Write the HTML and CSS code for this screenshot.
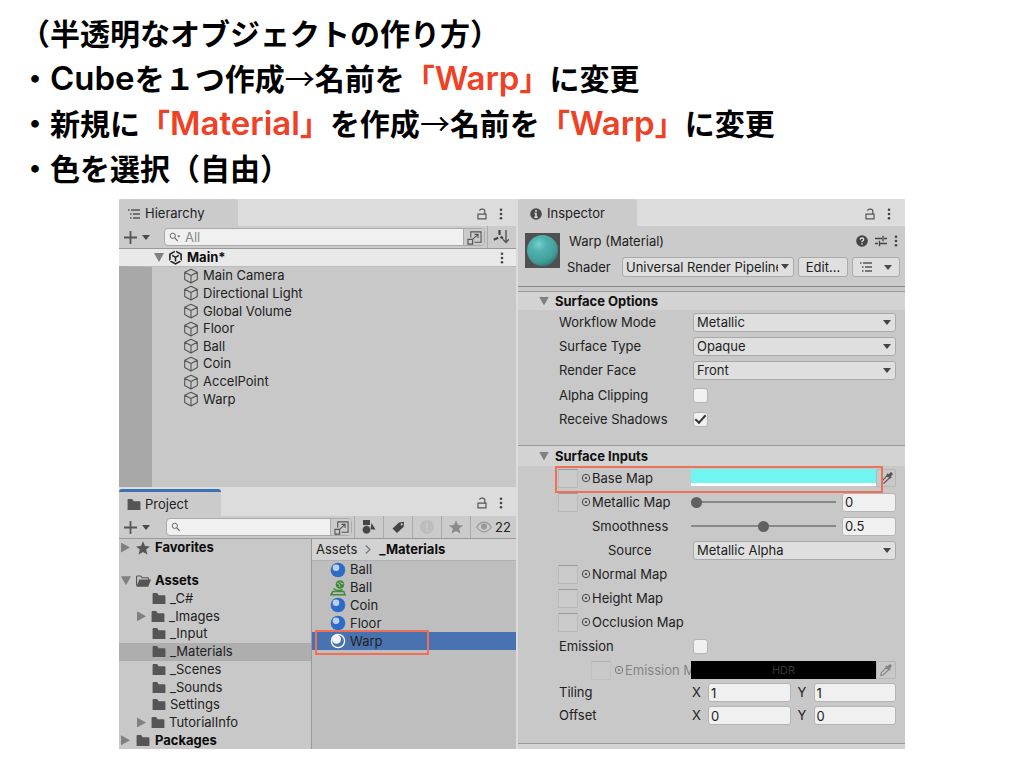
FILE: index.html
```html
<!DOCTYPE html>
<html lang="ja">
<head>
<meta charset="utf-8">
<title>半透明なオブジェクトの作り方</title>
<link rel="stylesheet" href="styles.css">
</head>
<body>
<svg class="defs" aria-hidden="true">
  <symbol id="cube" viewBox="0 0 16 16"><path d="M8 1.2 14.3 4.300V11.500L8 15 1.700 11.500V4.300zM1.700 4.300 8 7.600l6.300-3.300M8 7.600V15" fill="none" stroke="#555" stroke-width="1.100" stroke-linejoin="round"/></symbol>
  <symbol id="unity" viewBox="0 0 16 16"><path d="M8 1.200 14 4.500V11.500L8 14.800 2 11.500V4.500z" fill="none" stroke="#222" stroke-width="1.700"/><path d="M4.500 5.800 8 7.900l3.500-2.100M8 7.900v4.300" fill="none" stroke="#222" stroke-width="1.700"/><path d="M8 0v4M.8 12.500 4.200 10.500M15.200 12.500l-3.400-2" stroke="#e9e9e9" stroke-width="1.300"/></symbol>
  <symbol id="folder" viewBox="0 0 14 12"><path d="M0 1q0-1 1-1h4l1.500 2.500H13q1 0 1 1V12H0z" fill="#555"/></symbol>
  <symbol id="folder-open" viewBox="0 0 16 12"><path d="M.6 11V1.500Q.6.6 1.500.6H5L6.500 2.500h6q.8 0 .8.8V5" fill="none" stroke="#555" stroke-width="1.200"/><path d="M3.500 4.500H16L13 12H.5z" fill="#555"/></symbol>
  <symbol id="list" viewBox="0 0 12 10"><path d="M0 1h1.500M3 1h9M2 5h1.500M5 5h7M2 9h1.500M5 9h7" stroke="#555" stroke-width="1.300"/></symbol>
  <symbol id="lock" viewBox="0 0 10 12"><path d="M1 6.200h8v4.700H1zM7.800 6V3.200Q7.800 1.200 5.500 1.200H4.600Q2.800 1.200 2.600 2.800" fill="none" stroke="#555" stroke-width="1.200"/></symbol>
  <symbol id="dots" viewBox="0 0 4 12"><g fill="#444"><circle cx="2" cy="1.700" r="1.300"/><circle cx="2" cy="6" r="1.300"/><circle cx="2" cy="10.300" r="1.300"/></g></symbol>
  <symbol id="plus" viewBox="0 0 13 13"><path d="M6.500 0v13M0 6.500h13" stroke="#555" stroke-width="1.800"/></symbol>
  <symbol id="lens" viewBox="0 0 12 10"><circle cx="3.800" cy="3.800" r="2.600" fill="none" stroke="#666"/><path d="M5.800 5.800l2.800 3" stroke="#666" stroke-width="1.200"/></symbol>
  <symbol id="expand" viewBox="0 0 16 16"><path d="M4 8V2h11v11H8M1 10h5v5H1zM6.500 9.500 11.500 5M8 4.700h3.800v3.800" fill="none" stroke="#555" stroke-width="1.200"/></symbol>
  <symbol id="star" viewBox="0 0 14 14"><path d="M7 .3 9 5l5 .4-3.800 3.200 1.200 5L7 11l-4.400 2.600 1.200-5L0 5.400 5 5z"/></symbol>
  <symbol id="orb" viewBox="0 0 16 16"><circle cx="8" cy="8" r="7.300" fill="#2e6bc9"/><circle cx="6" cy="5.700" r="3.300" fill="#bcd0ec"/></symbol>
  <symbol id="orb-white" viewBox="0 0 16 16"><circle cx="8" cy="8" r="6.600" fill="#4873b0" stroke="#fff" stroke-width="1.300"/><circle cx="6.500" cy="6.200" r="4.500" fill="#f2f4f8"/></symbol>
  <symbol id="physic" viewBox="0 0 16 16"><circle cx="10" cy="4.500" r="4.300" fill="#3f8a3b"/><path d="M7 3q3 .5 3 4M9.500 1.500q1 2.500 4 2.500" stroke="#bebebe" fill="none"/><path d="M2.800 11.500h10.900l1.300 3.300H1z" fill="none" stroke="#3f8a3b" stroke-width="1.500"/><path d="M3.500 8.500q4.500 3.500 9 1" fill="none" stroke="#3f8a3b" stroke-width="1.500"/></symbol>
  <symbol id="target" viewBox="0 0 10 10"><circle cx="5" cy="5" r="3.700" fill="none" stroke="#444"/><circle cx="5" cy="5" r="1.100" fill="#444"/></symbol>
  <symbol id="dropper" viewBox="0 0 12 12"><path d="M6.300 3.300 8.700 5.700 3.200 11 .8 11.400 1.200 9z" fill="none" stroke="#555" stroke-width="1.100"/><path d="M5.500 2.300 9.800 6.600l1-1-1-1 1.700-1.900Q12 1.700 11.200.8 10.300 0 9.300.6L7.500 2.200l-1-1z" fill="#555"/></symbol>
</svg>

<header class="intro">
  <p>（半透明なオブジェクトの作り方）</p>
  <p>・<span class="latin">Cube</span>を１つ作成<span class="arrow">→</span>名前を<em>「<span class="latin">Warp</span>」</em>に変更</p>
  <p>・新規に<em>「<span class="latin">Material</span>」</em>を作成<span class="arrow">→</span>名前を<em>「<span class="latin">Warp</span>」</em>に変更</p>
  <p>・色を選択（自由）</p>
</header>

<main class="editor">
  <div class="left">
    <section class="hierarchy">
      <div class="tabbar">
        <button class="tab"><svg width="12" height="10"><use href="#list"/></svg>Hierarchy</button>
        <div class="tab-tools"><svg width="10" height="12"><use href="#lock"/></svg><svg width="4" height="12"><use href="#dots"/></svg></div>
      </div>
      <div class="toolbar">
        <button class="add" aria-label="Create"><svg width="13" height="13"><use href="#plus"/></svg><i class="down"></i></button>
        <label class="search"><svg width="12" height="10"><use href="#lens"/><path d="M8 3.500h3.500l-1.700 2z" fill="#666"/></svg><input type="text" placeholder="All" aria-label="Search hierarchy"><span class="expand"><svg width="15" height="15"><use href="#expand"/></svg></span></label>
        <button class="tool sort" aria-label="Sort"><svg width="16" height="14" viewBox="0 0 16 14"><path d="M13 0v12M9.800 9.200 13 12.400l3-3.200" fill="none" stroke="#555" stroke-width="1.400"/><path d="M6.500 0v5M.8 9.800l4.400-2M7.500 6.800l2.500 1.600" stroke="#444" stroke-width="2.200"/></svg></button>
      </div>
      <div class="scene"><i class="fold open"></i><svg width="15" height="15"><use href="#unity"/></svg><b>Main*</b><svg class="end" width="4" height="12"><use href="#dots"/></svg></div>
      <div class="objects">
        <ul>
          <li><svg width="16" height="16"><use href="#cube"/></svg>Main Camera</li>
          <li><svg width="16" height="16"><use href="#cube"/></svg>Directional Light</li>
          <li><svg width="16" height="16"><use href="#cube"/></svg>Global Volume</li>
          <li><svg width="16" height="16"><use href="#cube"/></svg>Floor</li>
          <li><svg width="16" height="16"><use href="#cube"/></svg>Ball</li>
          <li><svg width="16" height="16"><use href="#cube"/></svg>Coin</li>
          <li><svg width="16" height="16"><use href="#cube"/></svg>AccelPoint</li>
          <li><svg width="16" height="16"><use href="#cube"/></svg>Warp</li>
        </ul>
      </div>
    </section>

    <section class="project">
      <div class="tabbar">
        <button class="tab active"><svg width="14" height="11"><use href="#folder"/></svg>Project</button>
        <div class="tab-tools"><svg width="10" height="12"><use href="#lock"/></svg><svg width="4" height="12"><use href="#dots"/></svg></div>
      </div>
      <div class="toolbar">
        <button class="add" aria-label="Create asset"><svg width="13" height="13"><use href="#plus"/></svg><i class="down"></i></button>
        <label class="search"><svg width="12" height="10"><use href="#lens"/></svg><input type="text" aria-label="Search project"><span class="expand"><svg width="15" height="15"><use href="#expand"/></svg></span></label>
        <button class="tool" aria-label="Filter by type"><svg width="14" height="14" viewBox="0 0 14 14" fill="#444"><path d="M1 0h7v5H1zM9.500 3l4 6.500H8.500z"/><circle cx="4.500" cy="9.700" r="4.200" stroke="#cbcbcb" stroke-width=".6"/></svg></button>
        <button class="tool" aria-label="Filter by label"><svg width="13" height="13" viewBox="0 0 13 13"><path d="M7 1.500 12 .8l-.3 5L5 12 .5 7.500z" fill="#444"/><circle cx="9.700" cy="3.300" r="1.100" fill="#cbcbcb"/></svg></button>
        <button class="tool" aria-label="Log"><svg width="14" height="14" viewBox="0 0 14 14"><circle cx="7" cy="7" r="7" fill="#bdbdbd"/><path d="M7 3v5M7 9.500v2" stroke="#cbcbcb" stroke-width="1.600"/></svg></button>
        <button class="tool" aria-label="Favorite"><svg width="14" height="14" fill="#8b8b8b"><use href="#star"/></svg></button>
        <button class="tool hidden-count"><svg width="16" height="12" viewBox="0 0 16 12"><path d="M.7 6Q4 1.200 8 1.200T15.300 6Q12 10.800 8 10.800T.7 6z" fill="none" stroke="#999" stroke-width="1.200"/><circle cx="8" cy="5.500" r="3" fill="#999"/></svg>22</button>
      </div>
      <div class="browser">
        <nav class="tree">
          <div class="row root"><i class="fold"></i><svg width="14" height="14" fill="#555"><use href="#star"/></svg><b>Favorites</b></div>
          <ul>
            <li class="row root"><i class="fold open"></i><svg width="15" height="12"><use href="#folder-open"/></svg><b>Assets</b></li>
            <li class="row"><svg width="14" height="11"><use href="#folder"/></svg>_C#</li>
            <li class="row parent"><i class="fold"></i><svg width="14" height="11"><use href="#folder"/></svg>_Images</li>
            <li class="row"><svg width="14" height="11"><use href="#folder"/></svg>_Input</li>
            <li class="row current"><svg width="14" height="11"><use href="#folder"/></svg>_Materials</li>
            <li class="row"><svg width="14" height="11"><use href="#folder"/></svg>_Scenes</li>
            <li class="row"><svg width="14" height="11"><use href="#folder"/></svg>_Sounds</li>
            <li class="row"><svg width="14" height="11"><use href="#folder"/></svg>Settings</li>
            <li class="row parent"><i class="fold"></i><svg width="14" height="11"><use href="#folder"/></svg>TutorialInfo</li>
            <li class="row root"><i class="fold"></i><svg width="14" height="11"><use href="#folder"/></svg><b>Packages</b></li>
          </ul>
        </nav>
        <div class="files">
          <div class="crumbs"><span>Assets</span><svg width="6" height="9" viewBox="0 0 6 9"><path d="M.8.5 5 4.500.8 8.500" fill="none" stroke="#777" stroke-width="1.300"/></svg><b>_Materials</b></div>
          <ul>
            <li><svg width="16" height="16"><use href="#orb"/></svg>Ball</li>
            <li><svg width="16" height="16"><use href="#physic"/></svg>Ball</li>
            <li><svg width="16" height="16"><use href="#orb"/></svg>Coin</li>
            <li><svg width="16" height="16"><use href="#orb"/></svg>Floor</li>
            <li class="selected"><svg width="16" height="16"><use href="#orb-white"/></svg>Warp<span class="mark file-mark"></span></li>
          </ul>
        </div>
      </div>
    </section>
  </div>

  <section class="inspector">
    <div class="tabbar">
      <button class="tab"><svg width="12" height="12" viewBox="0 0 12 12"><circle cx="6" cy="6" r="5.800" fill="#4a4a4a"/><path d="M6 2v2M4.500 5.500H6V9M4.300 9.200h3.400" fill="none" stroke="#ddd" stroke-width="1.500"/></svg>Inspector</button>
      <div class="tab-tools"><svg width="10" height="12"><use href="#lock"/></svg><svg width="4" height="12"><use href="#dots"/></svg></div>
    </div>
    <div class="material">
      <div class="thumb"><i></i></div>
      <div class="material-info">
        <div class="title-row"><h1>Warp (Material)</h1>
          <svg width="12" height="12" viewBox="0 0 12 12"><circle cx="6" cy="6" r="5.800" fill="#444"/><path d="M4.200 4.800Q4.200 3 6 3t1.800 1.500Q7.800 5.500 6 6.300v.9M6 8.200v1.500" fill="none" stroke="#ddd" stroke-width="1.300"/></svg>
          <svg width="12" height="12" viewBox="0 0 12 12"><path d="M0 3.500h7M9 3.500h3M8 .8v5.400M0 8.500h3M5 8.500h7M4.500 5.800v5.400" stroke="#444" stroke-width="1.300"/></svg>
          <svg width="4" height="12"><use href="#dots"/></svg>
        </div>
        <div class="shader-row"><label for="shader">Shader</label>
          <span class="select"><select id="shader"><option>Universal Render Pipeline/Lit</option></select></span>
          <button class="btn">Edit...</button>
          <button class="btn list-btn" aria-label="Shader list"><svg width="12" height="10"><use href="#list"/></svg><i class="down"></i></button>
        </div>
      </div>
    </div>

    <h2><i class="fold open"></i>Surface Options</h2>
    <div class="props">
      <div class="prop"><label for="workflow">Workflow Mode</label><span class="select"><select id="workflow"><option>Metallic</option></select></span></div>
      <div class="prop"><label for="surface">Surface Type</label><span class="select"><select id="surface"><option>Opaque</option></select></span></div>
      <div class="prop"><label for="face">Render Face</label><span class="select"><select id="face"><option>Front</option></select></span></div>
      <div class="prop"><label for="clip">Alpha Clipping</label><input type="checkbox" id="clip"></div>
      <div class="prop"><label for="shadows">Receive Shadows</label><input type="checkbox" id="shadows" checked></div>
    </div>

    <h2 class="inputs-head"><i class="fold open"></i>Surface Inputs</h2>
    <div class="props inputs">
      <div class="prop map base"><div class="name"><i class="slot"></i><svg width="10" height="10"><use href="#target"/></svg>Base Map</div><div class="color"><button class="swatch" aria-label="Base color"></button><button class="pick" aria-label="Pick color"><svg width="12" height="12"><use href="#dropper"/></svg></button></div><span class="mark base-mark"></span></div>
      <div class="prop map"><label class="name" for="metallic"><i class="slot"></i><svg width="10" height="10"><use href="#target"/></svg>Metallic Map</label><div class="slide"><input type="range" id="metallic" min="0" max="1" step="0.01" value="0"><input type="text" value="0" aria-label="Metallic value"></div></div>
      <div class="prop"><label class="sub" for="smooth">Smoothness</label><div class="slide"><input type="range" id="smooth" min="0" max="1" step="0.01" value="0.5"><input type="text" value="0.5" aria-label="Smoothness value"></div></div>
      <div class="prop"><label class="subsub" for="source">Source</label><span class="select"><select id="source"><option>Metallic Alpha</option></select></span></div>
      <div class="prop map"><div class="name"><i class="slot"></i><svg width="10" height="10"><use href="#target"/></svg>Normal Map</div></div>
      <div class="prop map"><div class="name"><i class="slot"></i><svg width="10" height="10"><use href="#target"/></svg>Height Map</div></div>
      <div class="prop map"><div class="name"><i class="slot"></i><svg width="10" height="10"><use href="#target"/></svg>Occlusion Map</div></div>
      <div class="prop emission"><label for="emission">Emission</label><input type="checkbox" id="emission"></div>
      <div class="prop map disabled"><div class="name"><i class="slot"></i><svg width="10" height="10"><use href="#target"/></svg>Emission Map</div><div class="color"><button class="swatch hdr" disabled>HDR</button><button class="pick" aria-label="Pick emission color" disabled><svg width="12" height="12"><use href="#dropper"/></svg></button></div></div>
      <div class="prop pair"><span>Tiling</span><div class="xy"><label for="tx">X</label><input type="text" id="tx" value="1"><label for="ty">Y</label><input type="text" id="ty" value="1"></div></div>
      <div class="prop pair"><span>Offset</span><div class="xy"><label for="ox">X</label><input type="text" id="ox" value="0"><label for="oy">Y</label><input type="text" id="oy" value="0"></div></div>
    </div>
    <div class="next-section"></div>
  </section>
</main>
</body>
</html>
```
FILE: styles.css
```css
* { box-sizing: border-box; }
body { margin: 0; background: #fff; color: #222; font: 13px/17px Inter, "Liberation Sans", sans-serif; }
ul, p, h1, h2 { margin: 0; padding: 0; }
ul { list-style: none; }
svg { display: block; flex: none; }
.defs { position: absolute; width: 0; height: 0; }
button, input, select { font: inherit; color: inherit; margin: 0; min-width: 0; }
button { border: 0; background: none; padding: 0; }
b { font-weight: 700; color: #0c0c0c; }

.intro { padding: 10px 20px 9px; font: bold 30px/45px "Noto Sans CJK JP", sans-serif; color: #000; }
.intro p { height: 45px; white-space: nowrap; }
.intro em { font-style: normal; color: #ee4126; }
.latin { font-family: Inter, sans-serif; font-weight: 600; font-size: 33px; line-height: 1; }
.arrow { font-weight: 400; }

.editor { display: grid; grid-template-columns: 399fr 387fr; margin: 0 119px; background: #c8c8c8; overflow: hidden; }
.left { border-right: 2px solid #dcdcdc; min-width: 0; display: flex; flex-direction: column; }

.tabbar { display: flex; justify-content: space-between; height: 27px; background: #dcdcdc; }
.tab { display: flex; align-items: center; gap: 5px; width: 119px; padding: 2px 9px 0; background: #cbcbcb; border-radius: 3px 3px 0 0; }
.tab.active { width: 102px; padding: 0 8px; border-top: 3px solid #3a72b5; gap: 4px; }
.tab-tools { display: flex; align-items: center; gap: 12px; padding: 2px 13px 0 0; }
.project .tab-tools { padding-top: 0; }
.inspector .tab { padding-left: 12px; }
.inspector .tab-tools { padding-right: 14px; }

.toolbar { display: flex; align-items: center; height: 23px; background: #cbcbcb; border-bottom: 1px solid #999; }
.add { display: flex; align-items: center; gap: 5px; padding: 0 14px 0 5px; }
.down { width: 0; height: 0; border: 4px solid transparent; border-top: 5px solid #4a4a4a; border-bottom: 0; }
.search { flex: 1; display: flex; align-items: center; height: 18px; border: 1px solid #aaa; border-radius: 4px; background: #f0f0f0; padding-left: 4px; overflow: hidden; min-width: 0; }
.search input { flex: 1; border: 0; background: none; padding: 0 4px; height: 16px; outline: 0; }
.search input::placeholder { color: #8a8a8a; opacity: 1; }
.expand { display: flex; align-items: center; justify-content: center; width: 21px; height: 16px; background: #cbcbcb; border-left: 1px solid #aaa; }
.tool { display: flex; align-items: center; justify-content: center; gap: 3px; width: 29px; height: 22px; border-left: 1px solid #aaa; }
.sort { margin-left: 2px; padding-right: 2px; }
.project .search { margin-right: 2px; }
.project .add { padding-right: 16px; }
.hidden-count { width: 46px; }

.fold { flex: none; width: 9px; height: 10px; background: #808080; clip-path: polygon(0 0, 100% 50%, 0 100%); }
.fold.open { width: 10px; height: 9px; clip-path: polygon(0 0, 100% 0, 50% 100%); }

.scene { display: flex; align-items: center; gap: 4px; height: 17px; padding: 0 12px 0 35px; background: #e9e9e9; }
.scene .end { margin-left: auto; }
.objects { height: 221px; border-top: 1px solid #bbb; border-left: 33px solid #a8a8a8; }
.objects ul { display: grid; grid-auto-rows: 1fr; height: 141px; }
.objects li { display: flex; align-items: center; gap: 4px; padding-left: 31px; }
.project { padding-top: 2px; background: #dcdcdc; flex: 1; display: flex; flex-direction: column; }

.browser { flex: 1; display: grid; grid-template-columns: 193px 1fr; }
.tree { background: #c8c8c8; border-right: 1px solid #999; }
.tree ul { display: grid; grid-auto-rows: 1fr; height: 177px; margin-top: 16px; }
.row { display: flex; align-items: center; gap: 4px; padding-left: 33px; }
.row.parent { padding-left: 18px; gap: 5px; }
.row.parent svg { margin-right: -1px; }
.row.root { padding-left: 2px; gap: 5px; }
.row.root svg { margin-left: 1px; }
.row.root .open + svg { margin: 0 -1px 0 0; }
.current { background: #aeaeae; }
.files { background: #bebebe; }
.crumbs { display: flex; align-items: center; gap: 8px; height: 22px; padding-left: 4px; background: #d2d2d2; border-bottom: 1px solid #b0b0b0; }
.files ul { display: grid; grid-auto-rows: 1fr; height: 89px; }
.files li { display: flex; align-items: center; gap: 4px; padding-left: 18px; }
.files .selected { position: relative; background: #4873b0; }
.mark { position: absolute; border: 2px solid #ee7057; pointer-events: none; }
.file-mark { left: 3px; top: -2px; width: 114px; height: 25px; }

.inspector { min-width: 0; }
.material { display: flex; gap: 7px; padding: 7px 5px 8px 7px; height: 61px; background: #cbcbcb; border-bottom: 1px solid #858585; }
.thumb { flex: none; width: 35px; height: 35px; padding: 2px; background: #505050; }
.thumb i { display: block; width: 31px; height: 31px; border-radius: 50%; background: radial-gradient(circle at 38% 30%, #78cfcb 0, #4fb3b0 25%, #439e9b 60%, #225452 100%); }
.material-info { flex: 1; min-width: 0; }
.title-row { display: flex; align-items: center; gap: 7px; height: 16px; padding: 0 2px; }
.title-row h1 { flex: 1; font-size: 13px; font-weight: 400; }
.shader-row { display: flex; align-items: center; margin-top: 8px; gap: 4px; }
.shader-row label { width: 51px; }
.select { position: relative; flex: 1; min-width: 0; display: block; height: 20px; }
.select select { appearance: none; display: block; width: 100%; height: 20px; padding: 0 15px 0 3px; border: 1px solid #aaa; border-radius: 3px; background: #dfdfdf; line-height: 18px; overflow: hidden; }
.select::after { content: ""; position: absolute; right: 5px; top: 7px; border: 4px solid transparent; border-top: 5px solid #444; border-bottom: 0; pointer-events: none; }
.btn { display: flex; align-items: center; justify-content: center; width: 50px; height: 20px; border: 1px solid #aaa; border-radius: 3px; background: #dfdfdf; }
.list-btn { width: 48px; gap: 12px; }

h2 { display: flex; align-items: center; gap: 6px; height: 23px; padding: 0 0 0 21px; font-size: 13px; line-height: 18px; font-weight: 700; color: #111; background: #d3d3d3; }
.material + h2 { height: 19px; margin-top: 4px; border-top: 1px solid #999; }
.inputs-head { height: 21px; border-top: 1px solid #999; }
.props { display: grid; grid-auto-rows: 1fr; height: 122px; margin-bottom: 13px; padding-right: 9px; }
.prop { position: relative; display: grid; grid-template-columns: 175px 1fr; align-items: center; }
.prop > label, .prop > span:first-child { padding-left: 41px; white-space: nowrap; }
.prop > .sub { padding-left: 74px; }
.prop > .subsub { padding-left: 90px; }
.props .select select { height: 19px; line-height: 17px; }
.props .select { height: 19px; }
.props.inputs { grid-auto-rows: auto; height: auto; margin-bottom: 16px; }
.inputs .prop { height: 24px; }
.inputs .emission { height: 25px; }
.prop > .name { display: flex; align-items: center; padding-left: 40px; white-space: nowrap; overflow: hidden; }
.name svg { margin: 0 1px 0 3px; }
.slot { flex: none; width: 20px; height: 19px; border: 1px solid #b9b9b9; border-top-color: #999; background: #cbcbcb; }
input[type="checkbox"] { appearance: none; width: 15px; height: 15px; border: 1px solid #b4b4b4; border-radius: 3px; background: #f0f0f0; display: grid; place-items: center; }
input[type="checkbox"]:checked::before { content: ""; width: 9px; height: 4px; margin-top: -3px; border: solid #333; border-width: 0 0 2px 2px; transform: rotate(-48deg); }
.inputs input[type="text"] { height: 19px; border: 1px solid #b4b4b4; border-radius: 3px; background: #f0f0f0; padding: 0 2px; outline: 0; width: 100%; }
.slide { display: grid; grid-template-columns: 1fr 54px; gap: 6px; align-items: center; margin-left: -2px; }
input[type="range"] { appearance: none; width: 100%; height: 12px; margin: 0; background: linear-gradient(#888, #888) center / 100% 2px no-repeat; }
input[type="range"]::-webkit-slider-thumb { appearance: none; width: 11px; height: 11px; border-radius: 50%; background: #606060; }
.color { display: flex; }
.swatch { flex: 1; height: 17px; margin-left: -2px; background: #71f5f0; border-bottom: 3px solid #fff; }
.swatch.hdr { height: 18px; border: 0; background: #000; color: #383838; font-size: 11px; }
.pick { width: 20px; height: 18px; display: grid; place-items: center; border: 1px solid #b5b5b5; border-radius: 2px; }
.base .pick { padding-left: 2px; }
.base-mark { left: 37px; top: 0; right: 13px; height: 27px; z-index: 1; }
.inputs .disabled { height: 22px; color: #858585; }
.disabled .name { padding-left: 73px; }
.disabled svg { opacity: .6; }
.disabled .slot { opacity: .5; }
.inputs .pair { height: 23px; }
.xy { display: grid; grid-template-columns: 9px 1fr 9px 1fr; gap: 7px; align-items: center; margin-left: -1px; }
.next-section { height: 6px; background: #d3d3d3; border-top: 1px solid #999; }
```
